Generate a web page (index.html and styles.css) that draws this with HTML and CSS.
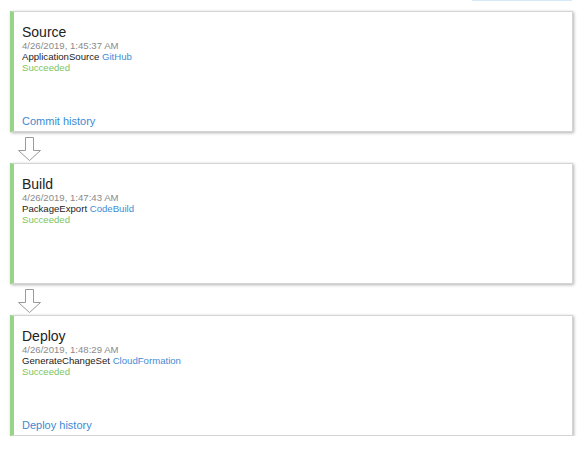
FILE: index.html
```html
<!DOCTYPE html>
<html>
<head>
<meta charset="utf-8">
<link rel="stylesheet" href="styles.css">
</head>
<body>
<div class="topbar"><div class="topbar-btn"></div></div>
<div class="stages">
  <div class="card">
    <div class="title">Source</div>
    <div class="date">4/26/2019, 1:45:37 AM</div>
    <div class="action">ApplicationSource <span class="provider">GitHub</span></div>
    <div class="status">Succeeded</div>
    <div class="footer">Commit history</div>
  </div>
  <div class="arrow-row">
    <svg class="arrow" width="24" height="25" viewBox="0 0 24 25"><polygon points="7.5,0.5 15.5,0.5 15.5,13.5 22.5,13.5 11.5,23.5 0.5,13.5 7.5,13.5" fill="#fff" stroke="#9a9a9a" stroke-width="1"/></svg>
  </div>
  <div class="card">
    <div class="title">Build</div>
    <div class="date">4/26/2019, 1:47:43 AM</div>
    <div class="action">PackageExport <span class="provider">CodeBuild</span></div>
    <div class="status">Succeeded</div>
  </div>
  <div class="arrow-row">
    <svg class="arrow" width="24" height="25" viewBox="0 0 24 25"><polygon points="7.5,0.5 15.5,0.5 15.5,13.5 22.5,13.5 11.5,23.5 0.5,13.5 7.5,13.5" fill="#fff" stroke="#9a9a9a" stroke-width="1"/></svg>
  </div>
  <div class="card">
    <div class="title">Deploy</div>
    <div class="date">4/26/2019, 1:48:29 AM</div>
    <div class="action">GenerateChangeSet <span class="provider">CloudFormation</span></div>
    <div class="status">Succeeded</div>
    <div class="footer">Deploy history</div>
  </div>
</div>
</body>
</html>
```

FILE: styles.css
```css
html, body {
  margin: 0;
  padding: 0;
  background: #fff;
  font-family: "Liberation Sans", Arial, sans-serif;
}

.topbar {
  display: flex;
  justify-content: flex-end;
  padding-right: 14px;
  height: 1px;
}

.topbar-btn {
  width: 100px;
  height: 1px;
  background: #d6e9f8;
}

.stages {
  display: flex;
  flex-direction: column;
  margin-top: 10px;
  padding-left: 10px;
  width: 563px;
}

.card {
  box-sizing: border-box;
  height: 121px;
  display: flex;
  flex-direction: column;
  border: 1px solid #d4d4d4;
  border-left: 4px solid #97d389;
  box-shadow: 1px 1px 3px rgba(0, 0, 0, 0.3);
  padding: 12px 8px 3px 8px;
  background: #fff;
}

.title {
  font-size: 14px;
  line-height: 16px;
  color: #222;
}

.date,
.action,
.status {
  font-size: 9.6px;
  line-height: 11px;
}

.date {
  color: #8b8b8b;
}

.action {
  color: #222;
}

.provider {
  color: #3f8dd6;
}

.status {
  color: #7cc55f;
}

.footer {
  margin-top: auto;
  font-size: 11px;
  line-height: 13px;
  color: #3b8ad4;
}

.arrow-row {
  height: 31px;
  display: flex;
  align-items: flex-start;
  padding: 5px 0 0 8px;
  box-sizing: border-box;
}

.arrow {
  display: block;
}
```
